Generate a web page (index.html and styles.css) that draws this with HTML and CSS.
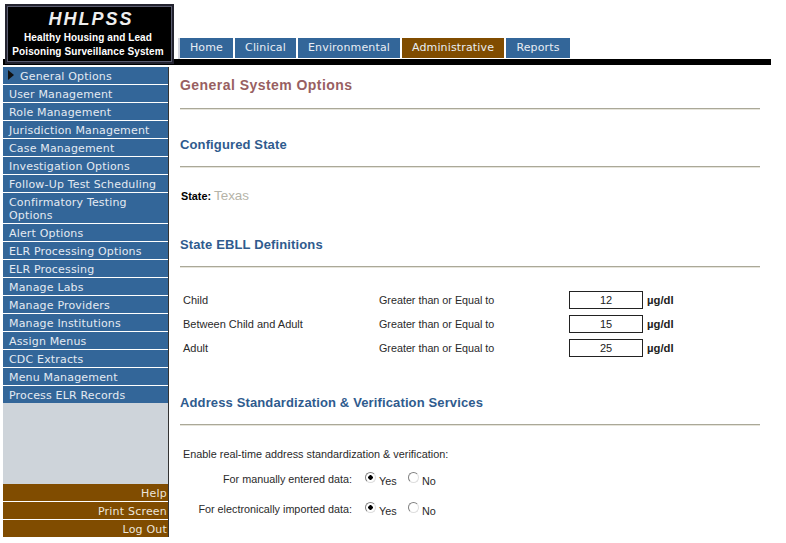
FILE: index.html
```html
<!DOCTYPE html>
<html lang="en">
<head>
<meta charset="utf-8">
<title>HHLPSS - General System Options</title>
<link rel="stylesheet" href="styles.css">
</head>
<body>
<div class="page">
  <header class="header">
    <div class="logo">
      <div class="logo-title">HHLPSS</div>
      <div class="logo-sub">Healthy Housing and Lead</div>
      <div class="logo-sub">Poisoning Surveillance System</div>
    </div>
    <nav class="tabs">
      <a class="tab tab-home">Home</a>
      <a class="tab tab-clinical">Clinical</a>
      <a class="tab tab-env">Environmental</a>
      <a class="tab tab-admin">Administrative</a>
      <a class="tab tab-reports">Reports</a>
    </nav>
  </header>
  <div class="body-row">
    <aside class="sidebar">
      <ul class="menu">
        <li class="menu-item current"><span class="arrow"></span>General Options</li>
        <li class="menu-item">User Management</li>
        <li class="menu-item">Role Management</li>
        <li class="menu-item">Jurisdiction Management</li>
        <li class="menu-item">Case Management</li>
        <li class="menu-item">Investigation Options</li>
        <li class="menu-item">Follow-Up Test Scheduling</li>
        <li class="menu-item wrap">Confirmatory Testing Options</li>
        <li class="menu-item">Alert Options</li>
        <li class="menu-item">ELR Processing Options</li>
        <li class="menu-item">ELR Processing</li>
        <li class="menu-item">Manage Labs</li>
        <li class="menu-item">Manage Providers</li>
        <li class="menu-item">Manage Institutions</li>
        <li class="menu-item">Assign Menus</li>
        <li class="menu-item">CDC Extracts</li>
        <li class="menu-item">Menu Management</li>
        <li class="menu-item">Process ELR Records</li>
      </ul>
      <div class="spacer"></div>
      <ul class="actions">
        <li class="action">Help</li>
        <li class="action">Print Screen</li>
        <li class="action">Log Out</li>
      </ul>
    </aside>
    <main class="content">
      <h1 class="page-title">General System Options</h1>
      <h2 class="section-title first">Configured State</h2>
      <p class="state"><b class="state-label">State:</b> <span class="state-value">Texas</span></p>
      <h2 class="section-title">State EBLL Definitions</h2>
      <div class="defs">
        <span>Child</span><span class="cond">Greater than or Equal to</span><input class="num" type="text" value="12"><b class="unit">µg/dl</b>
        <span>Between Child and Adult</span><span class="cond">Greater than or Equal to</span><input class="num" type="text" value="15"><b class="unit">µg/dl</b>
        <span>Adult</span><span class="cond">Greater than or Equal to</span><input class="num" type="text" value="25"><b class="unit">µg/dl</b>
      </div>
      <h2 class="section-title third">Address Standardization &amp; Verification Services</h2>
      <p class="enable">Enable real-time address standardization &amp; verification:</p>
      <div class="radio-row">
        <span class="radio-label">For manually entered data:</span>
        <input class="radio" type="radio" name="manual" checked><span class="opt">Yes</span>
        <input class="radio" type="radio" name="manual"><span class="opt">No</span>
      </div>
      <div class="radio-row">
        <span class="radio-label">For electronically imported data:</span>
        <input class="radio" type="radio" name="import" checked><span class="opt">Yes</span>
        <input class="radio" type="radio" name="import"><span class="opt">No</span>
      </div>
    </main>
  </div>
</div>
</body>
</html>
```

FILE: styles.css
```css
* { box-sizing: border-box; }
html, body { margin: 0; padding: 0; background: #fff; }
body { font-family: "Liberation Sans", Arial, sans-serif; font-size: 11px; color: #2a2a2a; overflow: hidden; }
.page { width: 768px; margin-left: 3px; height: 543px; }

.header { display: flex; align-items: flex-end; height: 65px; padding: 4px 0 0 2px; border-bottom: 6px solid #000; }
.logo { width: 169px; height: 60px; margin-bottom: -5px; background: #000; border: 3px solid #23232f; outline: 1px solid #5a5c70; outline-offset: -3px; color: #fff; text-align: center; position: relative; z-index: 1; padding-top: 3px; flex: none; }
.logo-title { font: italic bold 18px/18px "Liberation Sans", sans-serif; letter-spacing: 2px; color: #eee; margin-bottom: 3px; padding-left: 3px; }
.logo-sub { font: bold 10px/14px "Liberation Sans", sans-serif; letter-spacing: 0.1px; white-space: nowrap; padding-right: 3px; }

.tabs { display: flex; gap: 2px; margin-left: 4px; padding-bottom: 1px; border-left: 2px solid #d3d6e0; height: 21px; }
.tab { height: 20px; background: #336699; color: #e8edf4; font: 11px/19px "DejaVu Sans", Verdana, sans-serif; letter-spacing: 0.15px; text-align: center; }
.tab-home { width: 53px; }
.tab-clinical { width: 61px; }
.tab-env { width: 102px; }
.tab-admin { width: 102px; background: #804c00; }
.tab-reports { width: 64px; }

.body-row { display: flex; align-items: flex-start; padding-top: 2px; }

.sidebar { width: 166px; flex: none; border-right: 1px solid #333; display: flex; flex-direction: column; }
.menu, .actions { list-style: none; margin: 0; padding: 0; display: flex; flex-direction: column; gap: 1px; }
.menu-item { background: #336699; color: #e4eaf2; font: 11px/14px "DejaVu Sans", Verdana, sans-serif; letter-spacing: 0.17px; padding: 3px 6px 0; position: relative; }
.menu-item.wrap { line-height: 13px; padding-bottom: 1px; }
.menu-item.current { padding-left: 17px; }
.arrow { position: absolute; left: 5px; top: 3px; width: 0; height: 0; border-left: 6px solid #111; border-top: 5px solid transparent; border-bottom: 5px solid transparent; }
.spacer { height: 81px; background: #ced4da; }
.action { background: #804c00; color: #ece6dc; font: 11px/14px "DejaVu Sans", Verdana, sans-serif; letter-spacing: 0.2px; padding: 3px 1px 0; text-align: right; }

.content { flex: none; width: 580px; margin-left: 11px; }
.page-title { margin: 10px 0 0; height: 32px; font: bold 14px/17px "Liberation Sans", Arial, sans-serif; color: #985f62; border-bottom: 1px solid #aaa898; box-shadow: 0 1px 0 #e6e4da; letter-spacing: 0.45px; }
.section-title { margin: 0; font: bold 13px/17px "Liberation Sans", Arial, sans-serif; color: #2f5b8e; height: 31px; border-bottom: 1px solid #aaa898; box-shadow: 0 1px 0 #e6e4da; letter-spacing: 0.13px; }
.section-title.first { margin-top: 27px; }
.section-title.third { margin-top: 37px; }
.state { margin: 19px 0 30px 1px; font-size: 10.8px; line-height: 20px; height: 20px; }
.state-label { color: #000; }
.state-value { font-size: 13.4px; color: #b5b3a8; }

.defs { display: grid; grid-template-columns: 196px 190px 78px auto; align-items: center; row-gap: 6px; margin: 24px 0 0 3px; font-size: 11px; }
.cond { font-size: 10.75px; }
.num { width: 74px; height: 18px; margin: 0; padding: 0; border: 1px solid #222; font: 11px "Liberation Sans", Arial, sans-serif; text-align: center; color: #222; background: #fff; border-radius: 0; }
.unit { color: #222; font-size: 11.3px; }

.enable { margin: 22px 0 8px 3px; font-size: 10.85px; line-height: 14px; }
.radio-row { display: flex; align-items: center; height: 20px; margin-bottom: 10px; font-size: 10.8px; }
.radio-label { width: 172px; text-align: right; margin-right: 13px; }
.radio { appearance: none; width: 11px; height: 11px; margin: 0 3px 4px 0; border: 1px solid; border-color: #808080 #dedede #dedede #808080; border-radius: 50%; background: #fff; }
.radio:checked { background: radial-gradient(circle, #000 0 2px, #fff 2.5px); }
.opt { padding-top: 3px; width: 20px; margin-right: 9px; }
```
